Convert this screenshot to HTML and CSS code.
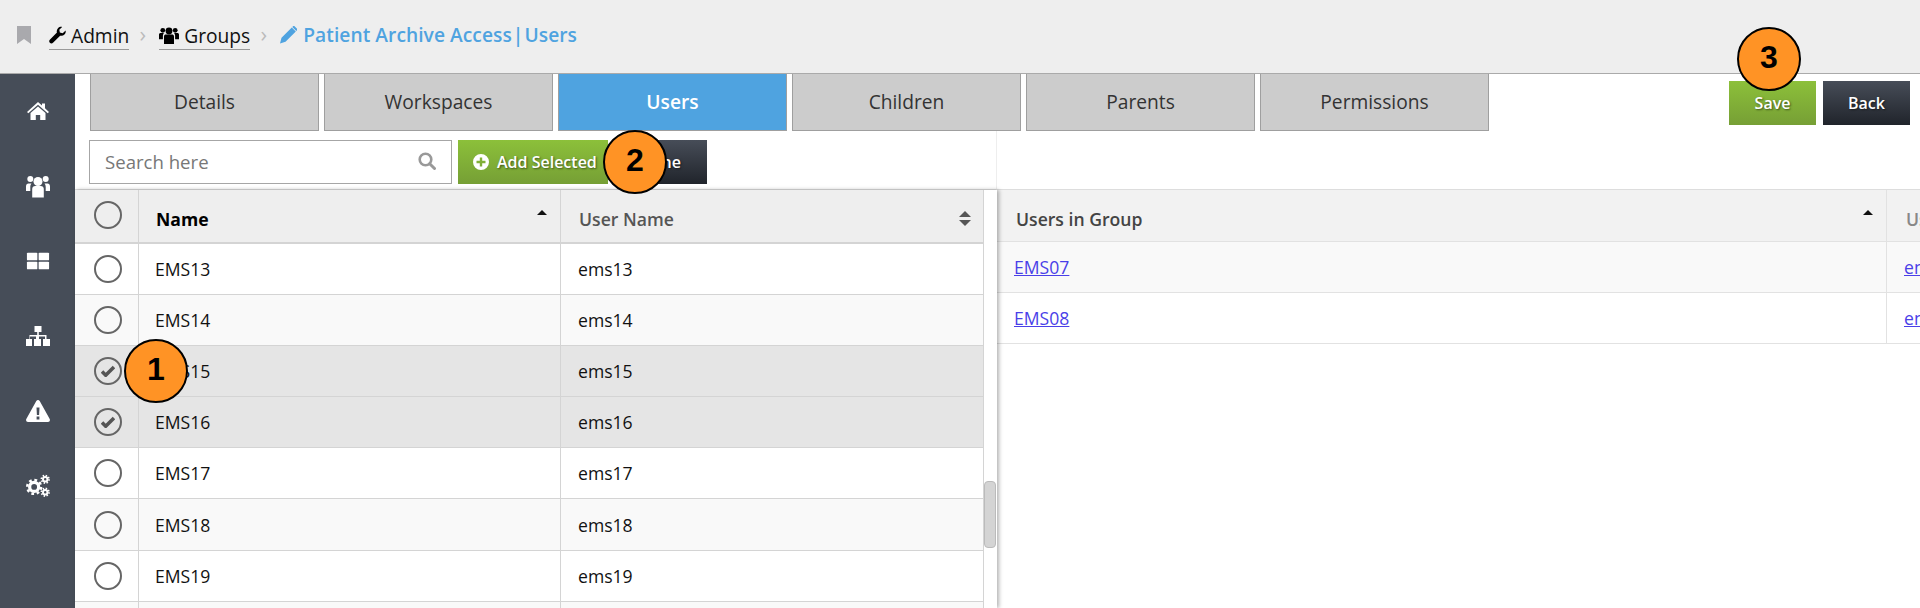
FILE: index.html
```html
<!DOCTYPE html>
<html lang="en">
<head>
    <meta charset="UTF-8">
    <title>Patient Archive Access | Users</title>
    <link rel="stylesheet" href="styles.css">
</head>
<body>
    <header class="top-bar">
        <svg class="crumb-mark" viewBox="0 0 14 18"><path d="M0 0h14v18l-7-5-7 5z"/></svg>
        <a class="crumb">
            <svg class="crumb-icon wrench" viewBox="0 0 18 18"><path d="M17.600 4.200c.3 1.700-.2 3.300-1.300 4.400-1.200 1.200-2.900 1.600-4.500 1.100L4.500 17c-1.100 1.200-2.700 1.200-3.600.2-1-1-.9-2.500.2-3.500l7.300-7.300C7.900 4.800 8.300 3 9.500 1.800 10.700.6 12.300.1 13.900.4l-3 3 .6 3 3 .7z"/></svg>
            Admin
        </a>
        <span class="crumb-sep">›</span>
        <a class="crumb">
            <svg class="crumb-icon users" viewBox="0 0 20 18"><circle cx="10" cy="5" r="3.400"/><circle cx="3.800" cy="4.300" r="2.400"/><circle cx="16.200" cy="4.300" r="2.400"/><path d="M5 10.500c0-1.400 1-2 2-2h6c1 0 2 .6 2 2V18H5z"/><path d="M0 8.500C0 7.500.8 7 1.700 7h3.200c-.5.700-1 1.500-1 2.500v3.700H0zM20 8.500c0-1-.8-1.500-1.700-1.500h-3.200c.5.700 1 1.500 1 2.500v3.700H20z"/></svg>
            Groups
        </a>
        <span class="crumb-sep">›</span>
        <svg class="crumb-icon pencil" viewBox="0 0 17 18"><path d="M11.800 1.500l4 4L5.500 15.800 0 17.500l1.500-5.700zM12.800.5c.6-.6 1.400-.6 2 0l2 2c.6.600.6 1.400 0 2l-.5.500-4-4z"/></svg>
        <span class="page-title">Patient Archive Access<span class="title-bar">|</span>Users</span>
    </header>

    <div class="app">
        <nav class="side-nav">
            <svg viewBox="-1 -3 24 24"><path d="M11 0l4 3.600V1.500h3v4.800L22 10l-1.300 1.300L11 2.800 1.300 11.300 0 10z"/><path d="M3.500 11L11 4.500l7.500 6.500v7h-5.300v-5H8.800v5H3.500z"/></svg>
            <svg viewBox="0 0 24 24"><circle cx="12" cy="7.500" r="4.500"/><circle cx="4.300" cy="5" r="3"/><circle cx="19.700" cy="5" r="3"/><path d="M6.200 15c0-2 1.300-3 3-3h5.600c1.700 0 3 1 3 3v8.500H6.200z"/><path d="M0 12.500C0 10.500 1 9.500 2.500 9.500h3c-.8 1-1.200 2-1.200 3.500v4H0zM24 12.500c0-2-1-3-2.500-3h-3c.8 1 1.200 2 1.200 3.500v4H24z"/></svg>
            <svg viewBox="-1 -3 26 24"><rect width="11.300" height="8.300" rx="1"/><rect x="12.700" width="11.300" height="8.300" rx="1"/><rect y="9.700" width="11.300" height="8.300" rx="1"/><rect x="12.700" y="9.700" width="11.300" height="8.300" rx="1"/></svg>
            <svg viewBox="0 0 24 20"><path d="M8.500 0h7v6h-2.700v3h7.700v4h3.500v7h-7v-7h2v-2.500h-6V13h2v7h-7v-7h2v-2.500h-6V13h2v7H0v-7h3.500V9h7.700V6H8.500z"/></svg>
            <svg viewBox="0 0 24 22"><path fill-rule="evenodd" d="M12 0c.7 0 1.300.4 1.700 1l10 18c.7 1.300-.2 3-1.700 3H2c-1.500 0-2.400-1.700-1.700-3l10-18c.4-.6 1-1 1.700-1zM10.500 7.500l.4 7.500h2.200l.4-7.500zM10.600 16.500v3h2.800v-3z"/></svg>
            <svg class="cogs" viewBox="0 0 25 24">
                <circle cx="8.500" cy="13" r="4.700" stroke-width="3.400"/>
                <circle cx="8.500" cy="13" r="7.200" stroke-width="2.600" stroke-dasharray="2.900 2.750"/>
                <circle cx="20" cy="5" r="2.300" stroke-width="2"/>
                <circle cx="20" cy="5" r="3.900" stroke-width="1.900" stroke-dasharray="1.500 1.560"/>
                <circle cx="20" cy="18.500" r="2.300" stroke-width="2"/>
                <circle cx="20" cy="18.500" r="3.900" stroke-width="1.900" stroke-dasharray="1.500 1.560"/>
            </svg>
        </nav>

        <main class="content">
            <div class="tab-bar">
                <div class="tabs">
                    <a class="tab">Details</a>
                    <a class="tab">Workspaces</a>
                    <a class="tab active">Users</a>
                    <a class="tab">Children</a>
                    <a class="tab">Parents</a>
                    <a class="tab">Permissions</a>
                </div>
                <div class="tab-actions">
                    <button class="btn btn-green">Save</button>
                    <button class="btn btn-dark">Back</button>
                </div>
            </div>

            <div class="panels">
                <section class="panel-left">
                    <div class="toolbar">
                        <div class="search-box">
                            <span class="search-text">Search here</span>
                            <svg class="search-icon" viewBox="0 0 18 18"><circle cx="7.500" cy="7.500" r="5.800" fill="none" stroke="currentColor" stroke-width="2.600"/><path d="M11.700 11.700L16.500 16.500" stroke="currentColor" stroke-width="3" stroke-linecap="round"/></svg>
                        </div>
                        <button class="btn btn-green btn-add">
                            <svg class="plus-icon" viewBox="0 0 16 16"><path fill-rule="evenodd" d="M8 0a8 8 0 110 16A8 8 0 018 0zM6.800 3.500v3.300H3.500v2.400h3.300v3.300h2.400V9.200h3.300V6.800H9.200V3.500z"/></svg>
                            Add Selected
                        </button>
                        <button class="btn btn-dark btn-done">Done</button>
                    </div>

                    <div class="grid-wrap">
                        <div class="grid-scroll">
                            <div class="row head">
                                <div class="cell cell-check"><span class="radio"></span></div>
                                <div class="cell cell-name sorted">Name<i class="sort-up"></i></div>
                                <div class="cell cell-user">User Name<i class="sort-both"></i></div>
                            </div>
                            <div class="row">
                                <div class="cell cell-check"><span class="radio"></span></div>
                                <div class="cell cell-name">EMS13</div>
                                <div class="cell cell-user">ems13</div>
                            </div>
                            <div class="row odd">
                                <div class="cell cell-check"><span class="radio"></span></div>
                                <div class="cell cell-name">EMS14</div>
                                <div class="cell cell-user">ems14</div>
                            </div>
                            <div class="row selected">
                                <div class="cell cell-check"><span class="radio checked"><svg viewBox="0 0 14 12"><path d="M1 6.500l3.700 3.700L13 2" fill="none" stroke="currentColor" stroke-width="3.600"/></svg></span></div>
                                <div class="cell cell-name">EMS15</div>
                                <div class="cell cell-user">ems15</div>
                            </div>
                            <div class="row selected">
                                <div class="cell cell-check"><span class="radio checked"><svg viewBox="0 0 14 12"><path d="M1 6.500l3.700 3.700L13 2" fill="none" stroke="currentColor" stroke-width="3.600"/></svg></span></div>
                                <div class="cell cell-name">EMS16</div>
                                <div class="cell cell-user">ems16</div>
                            </div>
                            <div class="row">
                                <div class="cell cell-check"><span class="radio"></span></div>
                                <div class="cell cell-name">EMS17</div>
                                <div class="cell cell-user">ems17</div>
                            </div>
                            <div class="row odd">
                                <div class="cell cell-check"><span class="radio"></span></div>
                                <div class="cell cell-name">EMS18</div>
                                <div class="cell cell-user">ems18</div>
                            </div>
                            <div class="row">
                                <div class="cell cell-check"><span class="radio"></span></div>
                                <div class="cell cell-name">EMS19</div>
                                <div class="cell cell-user">ems19</div>
                            </div>
                            <div class="row odd last">
                                <div class="cell cell-check"></div>
                                <div class="cell cell-name"></div>
                                <div class="cell cell-user"></div>
                            </div>
                        </div>
                        <div class="scroll-track"><div class="scroll-thumb"></div></div>
                    </div>
                </section>

                <section class="panel-right">
                    <div class="toolbar-space"></div>
                    <div class="rrow rhead">
                        <div class="rcell rcell-group">Users in Group<i class="sort-up"></i></div>
                        <div class="rcell rcell-user">User</div>
                    </div>
                    <div class="rrow rodd">
                        <div class="rcell rcell-group"><a class="link">EMS07</a></div>
                        <div class="rcell rcell-user"><a class="link">ems07</a></div>
                    </div>
                    <div class="rrow">
                        <div class="rcell rcell-group"><a class="link">EMS08</a></div>
                        <div class="rcell rcell-user"><a class="link">ems08</a></div>
                    </div>
                </section>
            </div>
        </main>
    </div>

    <!-- Numbered callouts -->
    <div class="callout callout-1">1</div>
    <div class="callout callout-2">2</div>
    <div class="callout callout-3">3</div>
</body>
</html>
```

FILE: styles.css
```css
* {
    box-sizing: border-box;
}

html, body {
    margin: 0;
    height: 608px;
    overflow: hidden;
}

body {
    font-family: "Open Sans", "Noto Sans", sans-serif;
    position: relative;
    background: #fff;
    color: #111;
}

/* Top bar */
.top-bar {
    height: 74px;
    background: #eee;
    border-bottom: 1px solid #aaa;
    display: flex;
    align-items: center;
    padding: 0 0 4px 17px;
    font-size: 19.2px;
}

.crumb-mark {
    width: 14px;
    height: 18px;
    fill: #a9a9ad;
    margin-right: 18px;
}

.crumb {
    display: flex;
    align-items: center;
    gap: 5px;
    color: #111;
    height: 28px;
    border-bottom: 1px solid #999;
    margin-top: 2px;
}

.crumb-icon {
    height: 18px;
    fill: #000;
}

.wrench {
    width: 17px;
}

.users {
    width: 20px;
}

.pencil {
    width: 17px;
    fill: #4fa3e0;
    margin-right: 6px;
}

.crumb-sep {
    width: 30px;
    padding-right: 3px;
    text-align: center;
    color: #bbb;
    font-size: 22px;
    margin-top: -3px;
}

.page-title {
    color: #4fa3e0;
    font-weight: 600;
    letter-spacing: 0.05px;
}

.title-bar {
    padding: 0 1px;
}

/* App frame */
.app {
    display: flex;
    height: 534px;
}

.side-nav {
    width: 75px;
    flex: none;
    background: #464d58;
    display: flex;
    flex-direction: column;
    align-items: center;
    padding-top: 25px;
    gap: 51px;
}

.side-nav svg {
    width: 24px;
    height: 24px;
    flex: none;
    fill: #fff;
}

.side-nav .cogs {
    fill: none;
    stroke: #fff;
}

.content {
    flex: 1;
    min-width: 0;
    display: flex;
    flex-direction: column;
}

/* Tabs */
.tab-bar {
    display: flex;
    justify-content: space-between;
    height: 57px;
    padding-left: 15px;
    padding-right: 10px;
}

.tabs {
    display: flex;
    gap: 5px;
}

.tab {
    width: 229px;
    height: 57px;
    display: flex;
    align-items: center;
    justify-content: center;
    padding-bottom: 2px;
    background: #ccc;
    border: 1px solid #9f9f9f;
    border-top: 0;
    font-size: 19.2px;
    color: #333;
}

.tab.active {
    background: #4fa3e0;
    color: #fff;
    font-weight: 600;
}

.tab-actions {
    display: flex;
    gap: 7px;
    padding-top: 7px;
}

/* Buttons */
.btn {
    font-family: inherit;
    font-size: 16px;
    font-weight: 600;
    height: 44px;
    width: 87px;
    border: 0;
    color: #fff;
    text-shadow: 1px 1px 2px rgba(0, 0, 0, 0.5);
    padding: 0;
}

.btn-green {
    background: linear-gradient(#8cc03a, #769f35);
}

.btn-dark {
    background: linear-gradient(#474d58, #20242b);
}

.btn-add {
    width: 150px;
    display: flex;
    align-items: center;
    padding-left: 15px;
    gap: 8px;
}

.btn-done {
    width: 93px;
}

.plus-icon {
    width: 16px;
    height: 16px;
    fill: #fff;
}

/* Panels */
.panels {
    flex: 1;
    min-height: 0;
    display: flex;
}

.panel-left {
    width: 922px;
    flex: none;
    display: flex;
    flex-direction: column;
}

.toolbar {
    height: 59px;
    display: flex;
    gap: 6px;
    padding: 9px 0 0 14px;
    border-bottom: 1px solid #ddd;
    border-right: 1px solid #eee;
}

.search-box {
    width: 363px;
    height: 44px;
    border: 1px solid #a6a6a6;
    background: #fff;
    display: flex;
    align-items: center;
    justify-content: space-between;
    padding: 0 15px;
}

.search-text {
    font-size: 18.6px;
    color: #777;
    margin-top: -2px;
}

.search-icon {
    width: 18px;
    height: 18px;
    color: #999;
    margin-top: -2px;
}

.grid-wrap {
    flex: 1;
    min-height: 0;
    display: flex;
    position: relative;
    overflow: hidden;
    box-shadow: 2px 0 4px rgba(0, 0, 0, 0.3);
}

.grid-scroll {
    width: 909px;
    flex: none;
}

.row {
    display: grid;
    grid-template-columns: 64px 422px 1fr;
    height: 51.1px;
    border-bottom: 1px solid #d4d4d4;
    background: #fff;
    font-size: 17.6px;
}

.row.head {
    height: 54px;
    border-bottom-width: 2px;
    background: #eee;
    font-weight: 600;
    color: #555;
}

.row.odd {
    background: #f9f9f9;
}

.row.selected {
    background: #e5e5e5;
}

.cell {
    display: flex;
    align-items: center;
    position: relative;
    border-right: 1px solid #d4d4d4;
    color: #111;
}

.head .cell {
    color: #555;
    padding-top: 5px;
}

.head .cell.sorted {
    color: #000;
    font-weight: 700;
}

.cell-check {
    justify-content: center;
    padding-left: 2px;
}

.head .cell-check {
    padding-top: 0;
    padding-bottom: 3px;
}

.cell-name {
    padding-left: 16px;
}

.head .cell-name {
    padding-left: 17px;
}

.cell-user {
    padding-left: 17px;
}

.head .cell-user {
    padding-left: 18px;
}

.radio {
    width: 28px;
    height: 28px;
    border-radius: 50%;
    border: 2px solid #666;
    display: flex;
    align-items: center;
    justify-content: center;
    color: #555;
}

.radio svg {
    width: 14px;
    height: 12px;
}

.sort-up,
.sort-both::before,
.sort-both::after {
    position: absolute;
    right: 13px;
    width: 0;
    height: 0;
    border-left: 5px solid transparent;
    border-right: 5px solid transparent;
}

.sort-up {
    top: 20px;
    border-bottom: 5px solid #111;
}

.sort-both::before,
.sort-both::after {
    content: "";
    right: 12px;
    border-left-width: 6px;
    border-right-width: 6px;
}

.sort-both::before {
    top: 21px;
    border-bottom: 6px solid #555;
}

.sort-both::after {
    top: 30px;
    border-top: 6px solid #555;
}

.scroll-track {
    flex: 1;
    position: relative;
}

.scroll-thumb {
    position: absolute;
    top: 291px;
    left: 0;
    width: 12px;
    height: 67px;
    background: #d4d4d4;
    border: 1px solid #bbb;
    border-radius: 4px;
}

.panel-right {
    flex: 1;
    min-width: 0;
    overflow: hidden;
}

.toolbar-space {
    height: 59px;
    border-bottom: 1px solid #ddd;
}

.rrow {
    display: grid;
    grid-template-columns: 890px 1fr;
    height: 51px;
    border-bottom: 1px solid #e2e2e2;
    font-size: 17.6px;
    width: 1100px;
}

.rhead {
    background: #f2f2f2;
    font-weight: 600;
    color: #444;
    height: 52px;
}

.rhead .rcell {
    padding: 7px 0 0 19px;
}

.rodd {
    background: #f9f9f9;
}

.rcell {
    position: relative;
    display: flex;
    align-items: center;
    padding-left: 17px;
}

.rcell-group {
    border-right: 1px solid #e2e2e2;
}

.rcell-user {
    color: #888;
}

.link {
    color: #4a3fe8;
    text-decoration: underline;
}

/* Numbered callouts */
.callout {
    position: absolute;
    width: 64px;
    height: 64px;
    border-radius: 50%;
    border: 2px solid #000;
    background: #ff9325;
    color: #000;
    font-family: "Liberation Sans", Arial, sans-serif;
    font-weight: 700;
    font-size: 32px;
    display: flex;
    align-items: center;
    justify-content: center;
    padding-bottom: 3px;
}

.callout-1 {
    left: 124px;
    top: 339px;
}

.callout-2 {
    left: 603px;
    top: 130px;
}

.callout-3 {
    left: 1737px;
    top: 27px;
}
```
